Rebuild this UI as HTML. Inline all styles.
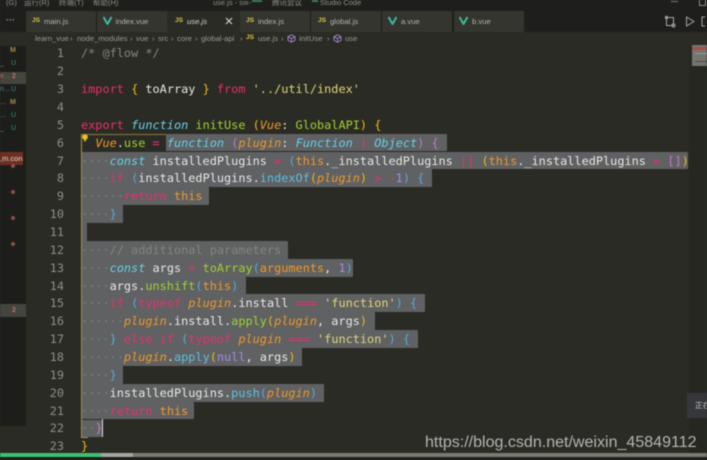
<!DOCTYPE html>
<html><head><meta charset="utf-8"><style>
html,body{margin:0;padding:0;background:#2a2b25}
#r{position:relative;width:707px;height:460px;overflow:hidden;background:#2a2b25;font-family:"Liberation Sans","Noto Sans CJK SC",sans-serif;filter:blur(.5px)}
#r div,#r span.a{position:absolute;white-space:pre}
.bx{background:#1e1f1c}
.tab{top:11px;height:20.5px;background:#34352f}
.tt{top:15.5px;font-size:7.7px;line-height:11px;color:#b4b4ae}
.js{top:15.5px;font-size:6.6px;line-height:10px;font-weight:bold;color:#dcc040}
.bc{top:32.5px;font-size:7.7px;line-height:11px;color:#9a9a94}
.s{left:81px;background:#5f6163;height:17.9px;border-radius:0 1px 1px 0}
.n{left:40px;width:24px;text-align:right;margin-top:1.4px;font:11.8px/17.86px "DejaVu Sans Mono",monospace;color:#8f8f89}
.c{left:81px;margin-top:1.4px;font:11.88px/17.86px "DejaVu Sans Mono",monospace;color:#e6e6e0}
.c span{font-weight:400}
.k{color:#e8306a}.f{color:#66d0e8;font-style:italic}.g{color:#a0d030}.p{color:#f0982a;font-style:italic}.o{color:#f0982a}
.y{color:#f0b818}.m{color:#c878c8}.b{color:#5aa8d8}.st{color:#e0d678}.cm{color:#85857c}.nu{color:#a888f0}.w{color:#e8e8e4}.d{color:#7c7e7e}.cy{color:#5cc0e0}
.sb{left:0;width:26px;font-size:7px;line-height:12px;color:#8a8a80}
.dot{left:11px;width:4px;height:4px;border-radius:50%;background:#8a5048}
</style></head><body><div id="r">
<!-- title bar -->
<div class="bx" style="left:0;top:0;width:707px;height:11px"></div>
<div style="left:6px;top:-3px;font-size:7.5px;line-height:11px;color:#8f8f89">(G)</div>
<div style="left:24px;top:-3px;font-size:7.5px;line-height:11px;color:#8f8f89">运行(R)</div>
<div style="left:59px;top:-3px;font-size:7.5px;line-height:11px;color:#8f8f89">终端(T)</div>
<div style="left:93px;top:-3px;font-size:7.5px;line-height:11px;color:#8f8f89">帮助(H)</div>
<div style="left:213px;top:-3px;font-size:7.5px;line-height:11px;color:#8f8f89">use.js - six-</div>
<div style="left:252px;top:-3px;width:10px;height:5px;background:#3a7a55"></div>
<div style="left:272px;top:-3px;font-size:7.5px;line-height:11px;color:#8f8f89">腾讯会议</div>
<div style="left:312px;top:-3px;width:6px;height:5px;background:#3a7a55"></div>
<div style="left:320px;top:-3px;font-size:7.5px;line-height:11px;color:#8f8f89">Studio Code</div>
<div style="left:671px;top:1px;width:7px;height:1px;background:#777"></div>
<div style="left:699px;top:-2px;width:5px;height:6px;border:1px solid #888"></div>
<!-- tab bar -->
<div class="bx" style="left:0;top:11px;width:707px;height:21px"></div>
<div style="left:6px;top:12px;font-size:9px;line-height:16px;color:#8f8f89;font-weight:bold">···</div>
<div class="tab" style="left:26px;width:70px"></div>
<div class="tab" style="left:97px;width:70px"></div>
<div class="tab" style="left:167px;width:73px;background:#2a2b25"></div>
<div class="tab" style="left:240px;width:70px"></div>
<div class="tab" style="left:311px;width:70px"></div>
<div class="tab" style="left:382px;width:70px"></div>
<div class="tab" style="left:454px;width:70px"></div>
<div class="js" style="left:32px">JS</div><div class="tt" style="left:44px">main.js</div>
<svg class="a" style="position:absolute;left:103px;top:16px" width="9" height="9"><path d="M0.5 1 L4.5 8 L8.5 1" fill="none" stroke="#3fb8a0" stroke-width="2"/></svg>
<div class="tt" style="left:115.5px">index.vue</div>
<div class="js" style="left:175px">JS</div><div class="tt" style="left:187px;font-style:italic;color:#d8d8d2">use.js</div>
<svg style="position:absolute;left:225px;top:17px" width="9" height="9"><path d="M1 1 L7 7 M7 1 L1 7" stroke="#d8d8d2" stroke-width="1.1"/></svg>
<div class="js" style="left:246px">JS</div><div class="tt" style="left:258px">index.js</div>
<div class="js" style="left:318px">JS</div><div class="tt" style="left:330px">global.js</div>
<svg style="position:absolute;left:388px;top:16px" width="9" height="9"><path d="M0.5 1 L4.5 8 L8.5 1" fill="none" stroke="#3fb8a0" stroke-width="2"/></svg>
<div class="tt" style="left:401px">a.vue</div>
<svg style="position:absolute;left:459px;top:16px" width="9" height="9"><path d="M0.5 1 L4.5 8 L8.5 1" fill="none" stroke="#3fb8a0" stroke-width="2"/></svg>
<div class="tt" style="left:472px">b.vue</div>
<svg style="position:absolute;left:664px;top:15px" width="43" height="14" fill="none" stroke="#a5a5a0" stroke-width="1"><rect x="2.5" y="2.5" width="7" height="8"/><circle cx="2.5" cy="2.5" r="1.2"/><circle cx="9.5" cy="10.5" r="1.6"/><path d="M22.5 2 L30 6.5 L22.5 11 Z"/><path d="M41 2 H38 V11 H41"/></svg>
<!-- breadcrumbs -->
<div class="bc" style="left:35px">learn_vue</div><div class="bc" style="left:70px">›</div>
<div class="bc" style="left:77px">node_modules</div><div class="bc" style="left:130px">›</div>
<div class="bc" style="left:136px">vue</div><div class="bc" style="left:152px">›</div>
<div class="bc" style="left:158px">src</div><div class="bc" style="left:171px">›</div>
<div class="bc" style="left:177px">core</div><div class="bc" style="left:195px">›</div>
<div class="bc" style="left:201px">global-api</div><div class="bc" style="left:240px">›</div>
<div class="js" style="left:246px;top:33px;color:#dcc040">JS</div>
<div class="bc" style="left:258px">use.js</div><div class="bc" style="left:281px">›</div>
<svg style="position:absolute;left:287px;top:34px" width="9" height="9" fill="none" stroke="#9a7fc0" stroke-width="1"><path d="M4.5 .8 L8 2.7 V6.3 L4.5 8.2 L1 6.3 V2.7 Z M1 2.7 L4.5 4.6 L8 2.7 M4.5 4.6 V8.2"/></svg>
<div class="bc" style="left:299px">initUse</div><div class="bc" style="left:327px">›</div>
<svg style="position:absolute;left:333px;top:34px" width="9" height="9" fill="none" stroke="#9a7fc0" stroke-width="1"><path d="M4.5 .8 L8 2.7 V6.3 L4.5 8.2 L1 6.3 V2.7 Z M1 2.7 L4.5 4.6 L8 2.7 M4.5 4.6 V8.2"/></svg>
<div class="bc" style="left:345px">use</div>
<!-- sidebar -->
<div style="left:0;top:46px;width:26px;height:380px;background:#1d1e1b"></div>
<div style="left:0;top:71.5px;width:26px;height:12.5px;background:#44453e"></div>
<div style="left:0;top:304px;width:26px;height:13px;background:#44453e"></div>
<div class="sb" style="left:10px;top:45px;width:auto;font-weight:bold;color:#a08a50">M</div>
<div class="sb" style="left:11px;top:58px;width:auto;color:#3a8a80">U</div>
<div class="sb" style="left:0;top:58px;width:auto;color:#5a8a80">_</div>
<div class="sb" style="left:0;top:71px;width:auto;color:#b06a60">e...</div>
<div class="sb" style="left:12px;top:71px;width:auto;font-weight:bold;color:#c07068">2</div>
<div class="sb" style="left:11px;top:84px;width:auto;color:#3a8a80">U</div>
<div class="sb" style="left:0;top:84px;width:auto;color:#5a8a80">n...</div>
<div class="sb" style="left:10px;top:97px;width:auto;font-weight:bold;color:#a08a50">M</div>
<div class="sb" style="left:0;top:97px;width:auto;color:#8a8a70">...</div>
<div class="sb" style="left:11px;top:110px;width:auto;color:#3a8a80">U</div>
<div class="sb" style="left:0;top:110px;width:auto;color:#5a8a80">...</div>
<div class="sb" style="left:11px;top:123px;width:auto;color:#3a8a80">U</div>
<div class="sb" style="left:0;top:123px;width:auto;color:#5a8a80">_</div>
<div style="left:0;top:152px;width:23px;height:13px;background:#6e3020;font-size:7.5px;line-height:13px;color:#ddd">,m.con</div>
<div class="dot" style="top:163.5px"></div><div class="dot" style="top:190px"></div><div class="dot" style="top:216px"></div><div class="dot" style="top:242px"></div>
<div class="sb" style="left:12px;top:305px;width:auto;font-weight:bold;color:#c07068">2</div>
<!-- selections -->
<div class="s" style="top:133.6px;width:366px;left:81px;background:linear-gradient(90deg,#2a2b25 85px,#5f6163 85px)"></div>
<div class="s" style="top:151.5px;width:607px"></div>
<div class="s" style="top:169.4px;width:351px"></div>
<div class="s" style="top:187.2px;width:128px"></div>
<div class="s" style="top:205.1px;width:42px"></div>
<div class="s" style="top:223px;width:6px"></div>
<div class="s" style="top:240.8px;width:207px"></div>
<div class="s" style="top:258.7px;width:272px"></div>
<div class="s" style="top:276.6px;width:165px"></div>
<div class="s" style="top:294.4px;width:344px"></div>
<div class="s" style="top:312.3px;width:294px"></div>
<div class="s" style="top:330.2px;width:337px"></div>
<div class="s" style="top:348px;width:221px"></div>
<div class="s" style="top:365.9px;width:42px"></div>
<div class="s" style="top:383.8px;width:243px"></div>
<div class="s" style="top:401.6px;width:113px"></div>
<div class="s" style="top:419.5px;width:21px"></div>
<div style="left:81px;top:134px;width:85px;height:1px;background:#8a7a3a"></div>
<div style="left:80.5px;top:134px;width:1px;height:303px;background:#a8923f"></div>
<div style="left:81px;top:436.5px;width:7px;height:1px;background:#a8923f"></div>
<div style="left:102px;top:419px;width:1px;height:18px;background:#d8d8d8"></div>
<!-- line numbers -->
<div class="n" style="top:44px">1</div><div class="n" style="top:61.9px">2</div><div class="n" style="top:79.7px">3</div><div class="n" style="top:97.6px">4</div><div class="n" style="top:115.4px">5</div><div class="n" style="top:133.3px">6</div><div class="n" style="top:151.2px">7</div><div class="n" style="top:169px">8</div><div class="n" style="top:186.9px">9</div><div class="n" style="top:204.7px">10</div><div class="n" style="top:222.6px">11</div><div class="n" style="top:240.5px">12</div><div class="n" style="top:258.3px">13</div><div class="n" style="top:276.2px">14</div><div class="n" style="top:294px">15</div><div class="n" style="top:311.9px">16</div><div class="n" style="top:329.8px">17</div><div class="n" style="top:347.6px">18</div><div class="n" style="top:365.5px">19</div><div class="n" style="top:383.3px">20</div><div class="n" style="top:401.2px">21</div><div class="n" style="top:419.1px">22</div><div class="n" style="top:436.9px">23</div>
<!-- code -->
<div class="c" style="top:44px"><span class="cm">/* @flow */</span></div>
<div class="c" style="top:79.7px"><span class="k">import</span> <span class="y">{</span> <span class="w">toArray</span> <span class="y">}</span> <span class="k">from</span> <span class="st">'../util/index'</span></div>
<div class="c" style="top:115.4px"><span class="k">export</span> <span class="f">function</span> <span class="g">initUse</span> <span class="y">(</span><span class="p">Vue</span><span class="w">:</span> <span class="g">GlobalAPI</span><span class="y">)</span> <span class="y">{</span></div>
<div class="c" style="top:133.3px">  <span class="p">Vue</span><span class="w">.</span><span class="g">use</span> <span class="k">=</span> <span class="f">function</span> <span class="m">(</span><span class="p">plugin</span><span class="w">:</span> <span class="f">Function</span> <span class="k">|</span> <span class="f">Object</span><span class="m">)</span> <span class="m">{</span></div>
<div class="c" style="top:151.2px"><span class="d">····</span><span class="f">const</span> <span class="w">installedPlugins</span> <span class="k">=</span> <span class="b">(</span><span class="o">this</span><span class="w">._installedPlugins</span> <span class="k">||</span> <span class="y">(</span><span class="o">this</span><span class="w">._installedPlugins</span> <span class="k">=</span> <span class="m">[]</span><span class="y">)</span></div>
<div class="c" style="top:169px"><span class="d">····</span><span class="k">if</span> <span class="b">(</span><span class="w">installedPlugins.</span><span class="cy">indexOf</span><span class="y">(</span><span class="p">plugin</span><span class="y">)</span> <span class="k">&gt;</span> <span class="k">-</span><span class="nu">1</span><span class="b">)</span> <span class="b">{</span></div>
<div class="c" style="top:186.9px"><span class="d">······</span><span class="k">return</span> <span class="o">this</span></div>
<div class="c" style="top:204.7px"><span class="d">····</span><span class="b">}</span></div>
<div class="c" style="top:240.5px"><span class="d">····</span><span class="cm">// additional parameters</span></div>
<div class="c" style="top:258.3px"><span class="d">····</span><span class="f">const</span> <span class="w">args</span> <span class="k">=</span> <span class="g">toArray</span><span class="b">(</span><span class="o">arguments</span><span class="w">,</span> <span class="nu">1</span><span class="b">)</span></div>
<div class="c" style="top:276.2px"><span class="d">····</span><span class="w">args.</span><span class="g">unshift</span><span class="b">(</span><span class="o">this</span><span class="b">)</span></div>
<div class="c" style="top:294px"><span class="d">····</span><span class="k">if</span> <span class="b">(</span><span class="k">typeof</span> <span class="p">plugin</span><span class="w">.install</span> <span class="k">===</span> <span class="st">'function'</span><span class="b">)</span> <span class="b">{</span></div>
<div class="c" style="top:311.9px"><span class="d">······</span><span class="p">plugin</span><span class="w">.install.</span><span class="g">apply</span><span class="y">(</span><span class="p">plugin</span><span class="w">, args</span><span class="y">)</span></div>
<div class="c" style="top:329.8px"><span class="d">····</span><span class="b">}</span> <span class="k">else if</span> <span class="b">(</span><span class="k">typeof</span> <span class="p">plugin</span> <span class="k">===</span> <span class="st">'function'</span><span class="b">)</span> <span class="b">{</span></div>
<div class="c" style="top:347.6px"><span class="d">······</span><span class="p">plugin</span><span class="w">.</span><span class="cy">apply</span><span class="y">(</span><span class="nu">null</span><span class="w">, args</span><span class="y">)</span></div>
<div class="c" style="top:365.5px"><span class="d">····</span><span class="b">}</span></div>
<div class="c" style="top:383.3px"><span class="d">····</span><span class="w">installedPlugins.</span><span class="cy">push</span><span class="b">(</span><span class="p">plugin</span><span class="b">)</span></div>
<div class="c" style="top:401.2px"><span class="d">····</span><span class="k">return</span> <span class="o">this</span></div>
<div class="c" style="top:419.1px"><span class="d">··</span><span class="m">}</span></div>
<div class="c" style="top:436.9px"><span class="y">}</span></div>
<!-- lightbulb -->
<svg style="position:absolute;left:81px;top:133px" width="8" height="10"><circle cx="4" cy="4" r="2.8" fill="#f0c020"/><rect x="3" y="6.5" width="2" height="2" fill="#c9a020"/></svg>
<!-- minimap / scrollbar -->
<div style="left:689px;top:45px;width:18px;height:408px;background:#262721"></div>
<div style="left:692px;top:45px;width:15px;height:21px;background:#75756f"></div>
<div style="left:692px;top:47px;width:15px;height:3px;background:#a5504a"></div>
<div style="left:695px;top:53px;width:12px;height:1px;background:#999"></div>
<div style="left:695px;top:61px;width:12px;height:1px;background:#4a4a46"></div>
<!-- notification -->
<div style="left:687px;top:393px;width:20px;height:25px;background:#35373a;color:#c8c8c8;font-size:7.6px;line-height:25px;padding-left:8px;box-sizing:border-box">正在</div>
<!-- watermark -->
<div style="left:425px;top:431.5px;font-size:16.05px;line-height:20px;color:#b4b4b0">https://blog.csdn.net/weixin_45849112</div>
<!-- bottom -->
<div style="left:0;top:453px;width:707px;height:3.5px;background:#7a7a74"></div>
<div style="left:0;top:453px;width:133px;height:3.5px;background:#a5a5a3"></div>
<div style="left:0;top:453px;width:101px;height:3.5px;background:#3fbf72"></div>
<div class="bx" style="left:0;top:456.5px;width:707px;height:4px"></div>
</div></body></html>
